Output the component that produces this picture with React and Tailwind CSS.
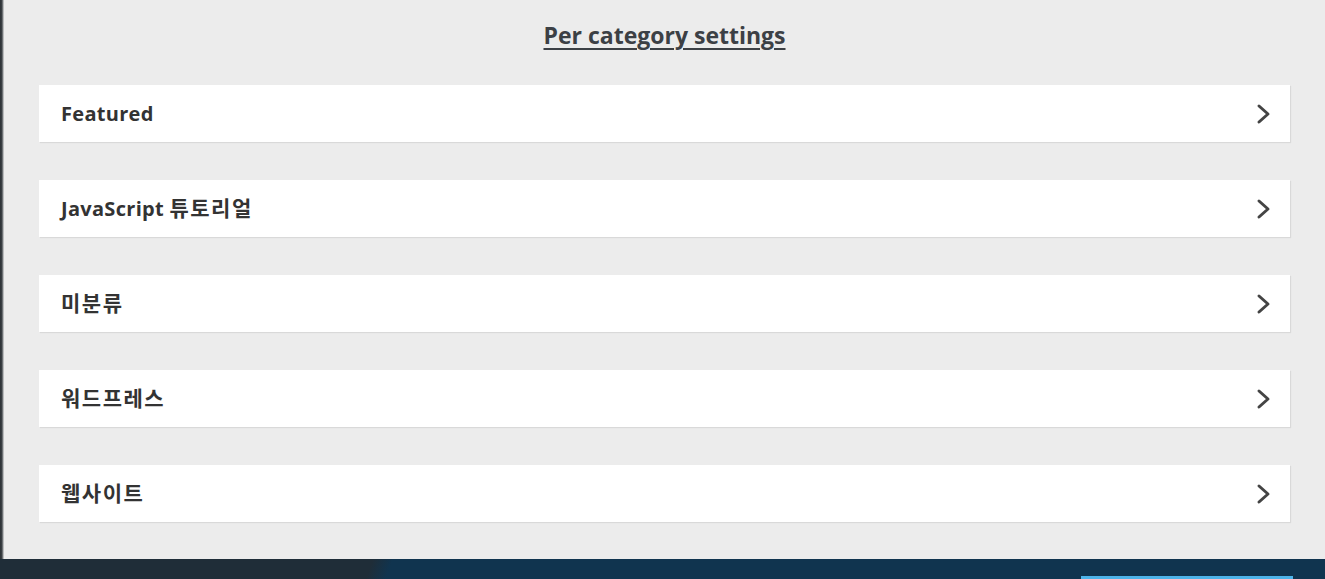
import React from 'react';

const categories = ['Featured', 'JavaScript 튜토리얼', '미분류', '워드프레스', '웹사이트'];

const Chevron = () => (
  <svg width="16" height="22" viewBox="0 0 16 22" fill="none">
    <polyline
      points="3,3 12,11 3,19"
      stroke="#444444"
      strokeWidth="3"
      strokeLinecap="round"
      strokeLinejoin="round"
    />
  </svg>
);

// Hangul runs get a touch more size and spacing than the Latin runs
const Label = ({ text }) =>
  text.split(/([\uAC00-\uD7A3]+)/).map((part, i) =>
    /[\uAC00-\uD7A3]/.test(part) ? (
      <span key={i} className="text-[21px] tracking-[1.5px]">{part}</span>
    ) : (
      <span key={i}>{part}</span>
    )
  );

const CategoryRow = ({ name }) => (
  <button className="flex h-[57px] w-full items-center justify-between bg-white pl-[22px] pr-[18px] text-left shadow-[1px_1px_1px_rgba(0,0,0,0.08)]">
    <span className="text-[20px] font-bold tracking-[0.3px] text-[#333333]">
      <Label text={name} />
    </span>
    <Chevron />
  </button>
);

export default function App() {
  return (
    <div
      className="flex h-[579px] w-[1325px] flex-col overflow-hidden"
      style={{ fontFamily: '"Open Sans", "Noto Sans CJK KR", sans-serif' }}
    >
      {/* Main panel */}
      <div className="flex h-[559px] bg-[#ececec]">
        <div className="w-[4px] bg-[linear-gradient(to_right,#2b3034_0px,#3d4246_2px,#9a9d9f_3px,#dcdcdc_4px)]" />
        <div className="flex flex-1 flex-col px-[35px]">
          <h2 className="mt-[18px] text-center text-[23px] font-bold leading-[34px] text-[#3c4045] underline decoration-2 underline-offset-4">
            Per category settings
          </h2>
          <div className="mt-[33px] flex flex-col gap-[38px]">
            {categories.map((c) => (
              <CategoryRow key={c} name={c} />
            ))}
          </div>
        </div>
      </div>

      {/* Bottom bar */}
      <div className="flex h-[20px] items-end justify-end bg-[linear-gradient(110deg,#1f2d38_0%,#1f2d38_28%,#10344f_29.5%,#10344f_100%)] pr-[32px]">
        <div className="h-[3px] w-[212px] bg-[#4db4ea]" />
      </div>
    </div>
  );
}
